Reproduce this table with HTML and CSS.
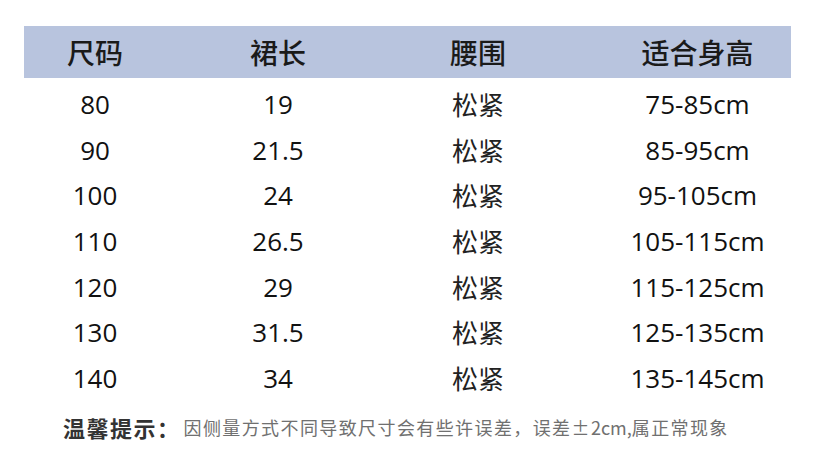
FILE: index.html
```html
<!DOCTYPE html>
<html lang="zh-CN">
<head>
<meta charset="utf-8">
<title>尺码表</title>
<link rel="stylesheet" href="styles.css">
</head>
<body>
<div class="page">
  <div class="table">
    <div class="row head">
      <div class="cell c1">尺码</div>
      <div class="cell c2">裙长</div>
      <div class="cell c3">腰围</div>
      <div class="cell c4">适合身高</div>
    </div>
    <div class="body">
      <div class="row"><div class="cell c1">80</div><div class="cell c2">19</div><div class="cell c3 cjk">松紧</div><div class="cell c4">75-85cm</div></div>
      <div class="row"><div class="cell c1">90</div><div class="cell c2">21.5</div><div class="cell c3 cjk">松紧</div><div class="cell c4">85-95cm</div></div>
      <div class="row"><div class="cell c1">100</div><div class="cell c2">24</div><div class="cell c3 cjk">松紧</div><div class="cell c4">95-105cm</div></div>
      <div class="row"><div class="cell c1">110</div><div class="cell c2">26.5</div><div class="cell c3 cjk">松紧</div><div class="cell c4">105-115cm</div></div>
      <div class="row"><div class="cell c1">120</div><div class="cell c2">29</div><div class="cell c3 cjk">松紧</div><div class="cell c4">115-125cm</div></div>
      <div class="row"><div class="cell c1">130</div><div class="cell c2">31.5</div><div class="cell c3 cjk">松紧</div><div class="cell c4">125-135cm</div></div>
      <div class="row"><div class="cell c1">140</div><div class="cell c2">34</div><div class="cell c3 cjk">松紧</div><div class="cell c4">135-145cm</div></div>
    </div>
  </div>
  <div class="note">
    <span class="note-label">温馨提示：</span><span class="note-text">因侧量方式不同导致尺寸会有些许误差，误差±<span class="latin">2cm,</span>属正常现象</span>
  </div>
</div>
</body>
</html>
```

FILE: styles.css
```css
html, body {
  margin: 0;
  padding: 0;
  background: #ffffff;
}

.page {
  width: 828px;
  height: 452px;
  padding-top: 26px;
  box-sizing: border-box;
  overflow: hidden;
}

.table {
  width: 767px;
  margin-left: 24px;
}

.row {
  display: grid;
  grid-template-columns: 142px 224px 176px 225px;
  height: 45.7px;
  align-items: center;
  font-family: "Open Sans", "Noto Sans CJK SC", sans-serif;
  font-size: 26px;
  color: #111111;
}

.head {
  height: 52px;
  background: #b8c4de;
  font-family: "Noto Sans CJK SC", sans-serif;
  font-size: 28px;
  font-weight: 500;
  color: #1a1a1a;
}

.body {
  padding-top: 3px;
}

.cell {
  text-align: center;
  line-height: 1;
  white-space: nowrap;
}

.c4 {
  padding-left: 38px;
}

.cjk {
  font-family: "Noto Sans CJK SC", sans-serif;
  font-size: 26px;
  color: #222222;
}

.note {
  display: flex;
  align-items: center;
  height: 32px;
  margin-top: 10px;
  padding-left: 63px;
  font-family: "Noto Sans CJK SC", sans-serif;
  white-space: nowrap;
}

.note-label {
  font-size: 22px;
  font-weight: 700;
  letter-spacing: 1.5px;
  color: #333333;
}

.note-text {
  margin-left: 3px;
  font-size: 18px;
  letter-spacing: 1.4px;
  color: #707070;
}

.latin {
  letter-spacing: 0;
}
```
